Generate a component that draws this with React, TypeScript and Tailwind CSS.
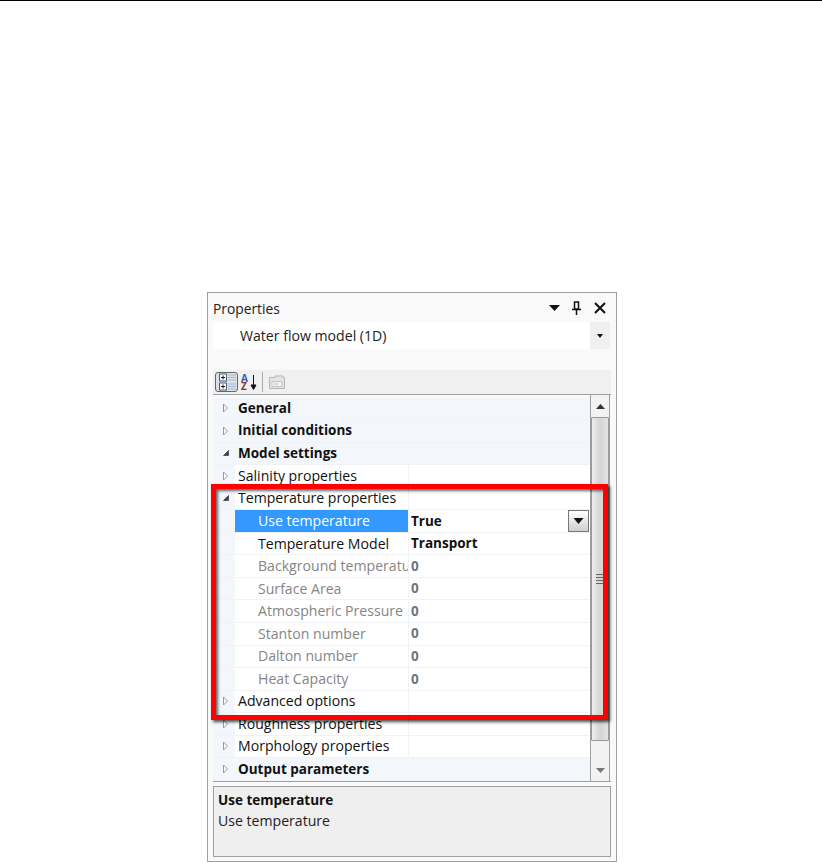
type Row = {
  label: string;
  value?: string;
  kind: 'category' | 'sub' | 'prop';
  bold?: boolean;
  open?: boolean;
  disabled?: boolean;
  selected?: boolean;
};

const rows: Row[] = [
  { label: 'General', kind: 'category', bold: true },
  { label: 'Initial conditions', kind: 'category', bold: true },
  { label: 'Model settings', kind: 'category', bold: true, open: true },
  { label: 'Salinity properties', kind: 'sub' },
  { label: 'Temperature properties', kind: 'sub', open: true },
  { label: 'Use temperature', value: 'True', kind: 'prop', selected: true },
  { label: 'Temperature Model', value: 'Transport', kind: 'prop' },
  { label: 'Background temperature', value: '0', kind: 'prop', disabled: true },
  { label: 'Surface Area', value: '0', kind: 'prop', disabled: true },
  { label: 'Atmospheric Pressure', value: '0', kind: 'prop', disabled: true },
  { label: 'Stanton number', value: '0', kind: 'prop', disabled: true },
  { label: 'Dalton number', value: '0', kind: 'prop', disabled: true },
  { label: 'Heat Capacity', value: '0', kind: 'prop', disabled: true },
  { label: 'Advanced options', kind: 'sub' },
  { label: 'Roughness properties', kind: 'sub' },
  { label: 'Morphology properties', kind: 'sub' },
  { label: 'Output parameters', kind: 'category', bold: true },
];

function Expander({ open }: { open?: boolean }) {
  return (
    <svg width="9" height="10" viewBox="0 0 9 10" className="ml-[8px] shrink-0">
      {open ? (
        <path d="M7.5 2.5V7.5H2.5Z" fill="#444" stroke="#444" strokeWidth="0.8" />
      ) : (
        <path d="M2.5 1L6.5 5L2.5 9Z" fill="#fff" stroke="#999" strokeWidth="1" />
      )}
    </svg>
  );
}

function GridRow({ row }: { row: Row }) {
  const isCategory = row.kind === 'category';
  return (
    <div
      className={`flex h-[22.56px] items-center border-b border-[#f0f2f6] ${isCategory ? 'bg-[#f3f6fb]' : 'bg-white'}`}
    >
      <div className="flex h-full w-[22px] shrink-0 items-center bg-[#f3f6fb]">
        {row.kind !== 'prop' && <Expander open={row.open} />}
      </div>
      <div
        className={`flex h-full w-[173px] shrink-0 items-center overflow-hidden whitespace-nowrap ${
          row.kind === 'prop' ? 'pl-[23px]' : 'pl-[3px]'
        } ${row.selected ? 'bg-[#3399ff] text-white' : row.disabled ? 'text-[#858585]' : 'text-[#111]'} ${
          row.bold ? 'pt-[0.5px] text-[13.5px] font-bold' : ''
        }`}
      >
        {row.label}
      </div>
      <div
        className={`relative flex h-full flex-1 items-center pt-[1px] pl-[2px] text-[13.5px] font-bold ${
          isCategory ? '' : 'border-l border-[#f0f2f6]'
        } ${row.disabled ? 'text-[#6f7680]' : 'text-[#111]'}`}
      >
        {row.value}
        {row.selected && (
          <div className="absolute top-0 right-px flex h-[22px] w-[21px] items-center justify-center border border-[#777] bg-gradient-to-b from-white to-[#cfcfcf]">
            <svg width="11" height="6" viewBox="0 0 11 6">
              <path d="M0.5 0H10.5L5.5 6Z" fill="#111" />
            </svg>
          </div>
        )}
      </div>
    </div>
  );
}

function CategorizedIcon() {
  const block = (y: number) => (
    <g key={y}>
      <rect x="3.5" y={y + 0.5} width="7" height="7" fill="#fff" stroke="#4a5f7a" />
      <path d={`M5 ${y + 4}H9M7 ${y + 2}V${y + 6}`} stroke="#111" />
      <path d={`M12 ${y + 1.5}H20M12 ${y + 4}H20M12 ${y + 6.5}H20`} stroke="#a3b6cf" />
    </g>
  );
  return (
    <div className="flex h-[20px] w-[23px] items-center justify-center rounded-[3px] border border-[#666] bg-[#dde1e6]">
      <svg width="21" height="18" viewBox="0 0 21 18">
        {block(0.5)}
        {block(9.5)}
      </svg>
    </div>
  );
}

function PagesIcon() {
  return (
    <svg width="16" height="14" viewBox="0 0 16 14">
      <path d="M0.5 2.5H6V1H14V2.5H15.5V13.5H0.5Z" fill="#e4e4e4" stroke="#b5b5b5" />
      <path d="M3 6.5H13V11.5H3Z" fill="#f2f2f2" stroke="#c4c4c4" />
      <path d="M5 9H9" stroke="#bbb" />
    </svg>
  );
}

function Scrollbar() {
  return (
    <div className="flex h-full w-[20px] shrink-0 flex-col border-x border-[#a0a0a0] bg-[#f2f2f2]">
      <div className="flex h-[22px] shrink-0 items-center justify-center">
        <svg width="9" height="5" viewBox="0 0 9 5">
          <path d="M0 5L4.5 0L9 5Z" fill="#333" />
        </svg>
      </div>
      <div className="flex h-[324px] shrink-0 items-center justify-center rounded-[1px] border border-[#999] bg-gradient-to-r from-[#eeeeee] via-[#d4d4d4] to-[#e4e4e4]">
        <div className="flex flex-col gap-[2px]">
          <div className="h-px w-[8px] bg-[#666]" />
          <div className="h-px w-[8px] bg-[#666]" />
          <div className="h-px w-[8px] bg-[#666]" />
          <div className="h-px w-[8px] bg-[#666]" />
        </div>
      </div>
      <div className="flex flex-1 items-end justify-center pb-[8px]">
        <svg width="9" height="5" viewBox="0 0 9 5">
          <path d="M0 0H9L4.5 5Z" fill="#777" />
        </svg>
      </div>
    </div>
  );
}

export default function App() {
  return (
    <div className="relative h-[863px] w-[822px] overflow-hidden bg-white font-['Open_Sans','Noto_Sans',sans-serif] text-[14.1px] leading-none text-[#111]">
      <div className="h-px w-full bg-black" />
      <div className="mt-[291px] ml-[207px] h-[570px] w-[410px] border border-[#a0a0a0] bg-[#f9f9f9] px-[5px]">
        <div className="flex h-[29px] items-center">
          <span className="flex-1 pt-[2px] text-[13.8px] text-[#222]">Properties</span>
          <svg width="11" height="6" viewBox="0 0 11 6" className="mr-[12px]">
            <path d="M0 0H11L5.5 6Z" fill="#111" />
          </svg>
          <svg width="9" height="14" viewBox="0 0 9 14" className="mr-[13px]">
            <path d="M0 8.5H9M2.5 1H6.5V8H2.5ZM4.5 8V14" stroke="#111" strokeWidth="1.5" fill="none" />
          </svg>
          <svg width="12" height="12" viewBox="0 0 12 12" className="mr-[5px]">
            <path d="M1 1L11 11M11 1L1 11" stroke="#111" strokeWidth="2" />
          </svg>
        </div>
        <div className="flex h-[27px] w-[397px] items-center bg-white pl-[27px] text-[#222]">
          <span className="flex-1 pt-[1px]">Water flow model (1D)</span>
          <div className="flex h-full w-[20px] items-center justify-center bg-[#f0f0f0]">
            <svg width="6" height="4" viewBox="0 0 6 4">
              <path d="M0 0H6L3 4Z" fill="#111" />
            </svg>
          </div>
        </div>
        <div className="mt-[21px] flex h-[24px] items-center bg-[#f0f0f0] pl-[2px]">
          <CategorizedIcon />
          <div className="ml-[3px] flex h-[20px] w-[21px] items-center">
            <div className="flex flex-col text-[10px] leading-[8px] font-bold">
              <span className="text-[#2f5fb8]">A</span>
              <span className="text-[#8f2f2f]">Z</span>
            </div>
            <svg width="7" height="15" viewBox="0 0 7 15" className="ml-[2px]">
              <path d="M3.5 0V13M1 10L3.5 14.5L6 10Z" stroke="#111" fill="#111" />
            </svg>
          </div>
          <div className="h-[20px] w-px bg-[#aaa]" />
          <div className="ml-[6px]">
            <PagesIcon />
          </div>
        </div>
        <div className="flex h-[388px] w-[398px] border-y border-[#a0a0a0]">
          <div className="h-full w-[377px] shrink-0 overflow-hidden pt-[2.5px]">
            {rows.map((row) => (
              <GridRow key={row.label} row={row} />
            ))}
          </div>
          <Scrollbar />
        </div>
        <div className="mt-[4px] h-[71px] w-[398px] border border-[#a0a0a0] bg-[#efefef] px-[4px] pt-[7px]">
          <div className="text-[13.5px] font-bold text-[#111]">Use temperature</div>
          <div className="mt-[6px] text-[#222]">Use temperature</div>
        </div>
      </div>
      <div className="absolute top-[484px] left-[211px] h-[236px] w-[397px] border-[5px] border-[#ff0000] shadow-[2px_2px_3px_rgba(0,0,0,0.7),inset_2px_2px_3px_rgba(0,0,0,0.6)]" />
    </div>
  );
}
